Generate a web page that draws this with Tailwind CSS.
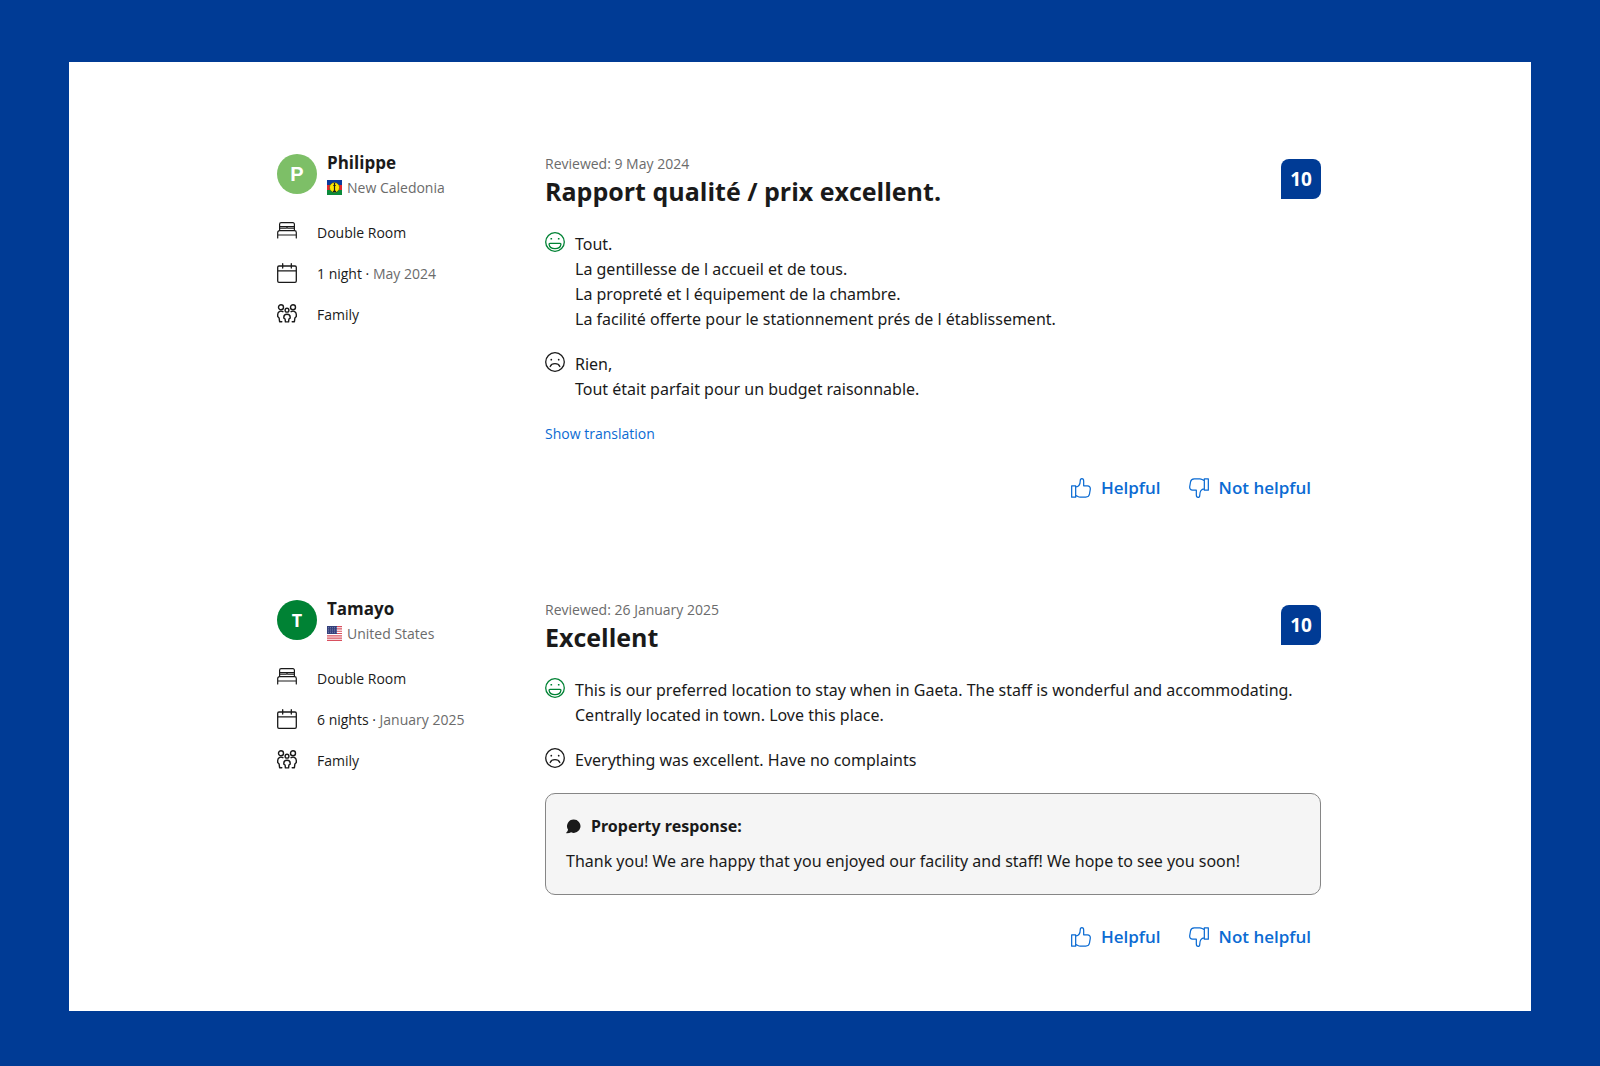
<!DOCTYPE html>
<html lang="en">
<head>
  <meta charset="UTF-8">
  <meta name="viewport" content="width=device-width, initial-scale=1.0">
  <title>Guest reviews</title>
  <script src="https://cdn.jsdelivr.net/npm/@tailwindcss/browser@4"></script>
</head>
<body class="bg-[#003b95] px-[69px] py-[62px] font-['Open_Sans',sans-serif] text-[#1a1a1a]">

  <!-- Shared icons -->
  <svg class="hidden" aria-hidden="true">
    <symbol id="bed" viewBox="0 0 20 20" fill="none" stroke="currentColor" stroke-width="1.2" stroke-linecap="round" stroke-linejoin="round">
      <path d="M.7 16V10.500a1.800 1.800 0 0 1 1.800-1.800h15a1.800 1.800 0 0 1 1.800 1.800V16M.7 13h18.600M2.600 8.500V2.200A1.500 1.500 0 0 1 4.100.7h11.800a1.500 1.500 0 0 1 1.500 1.500v6.300M2.800 4.500h14.400M10 4.700v1.200M9.200 6.200H3M10.800 6.200H17"/>
    </symbol>
    <symbol id="calendar" viewBox="0 0 20 20" fill="none" stroke="currentColor" stroke-width="1.3" stroke-linecap="round" stroke-linejoin="round">
      <path d="M2 3h16a1.300 1.300 0 0 1 1.300 1.300v13.700a1.300 1.300 0 0 1-1.300 1.300H2A1.300 1.300 0 0 1 .7 18V4.300A1.300 1.300 0 0 1 2 3zM.7 7.900h18.600M5.700.7v4.400M14.300.7v4.400"/>
    </symbol>
    <symbol id="family" viewBox="0 0 20 20" fill="none" stroke="currentColor" stroke-width="1.400" stroke-linecap="round" stroke-linejoin="round">
      <circle cx="4" cy="3.200" r="2.500"/>
      <circle cx="16" cy="3.200" r="2.500"/>
      <circle cx="10" cy="6.200" r="1.900"/>
      <path d="M5.900 7.700C3.200 6.300.7 7.800.7 10.600v2l1.400 1.300.5 3.800h2.200M14.100 7.700c2.700-1.400 5.200.1 5.200 2.900v2l-1.400 1.300-.5 3.800h-2.200"/>
      <path d="M10 10.200c-1.900 0-3.200 1.200-3.200 3v.9l1.300.9.300 2.900h3.200l.3-2.900 1.300-.9v-.9c0-1.800-1.300-3-3.200-3z"/>
    </symbol>
    <symbol id="smile" viewBox="0 0 20 20" fill="none" stroke="currentColor" stroke-width="1.300" stroke-linejoin="round">
      <circle cx="10" cy="10" r="9.300"/>
      <path d="M4.900 11.400h10.200a.8.800 0 0 1 .8.900c-.4 2.700-2.600 4.300-5.900 4.300s-5.500-1.600-5.900-4.300a.8.800 0 0 1 .8-.9z"/>
      <path d="M6.300 5.900v1.600M13.700 5.900v1.600" stroke-width="1.600"/>
    </symbol>
    <symbol id="frown" viewBox="0 0 20 20" fill="none" stroke="currentColor" stroke-width="1.300" stroke-linecap="round">
      <circle cx="10" cy="10" r="9.300"/>
      <path d="M5.200 14.600C6 12.600 7.800 11.700 10 11.700s4 .9 4.800 2.900"/>
      <path d="M6.300 7.500v.2M13.700 7.500v.2" stroke-width="1.700"/>
    </symbol>
    <symbol id="thumb-up" viewBox="0 0 21 21" fill="none" stroke="currentColor" stroke-width="1.300" stroke-linecap="round" stroke-linejoin="round">
      <path d="M.7 8.200h4.200v11.900H.7zM4.900 18.300l2.300 1.100c.8.400 1.500.6 2.400.6h5.900c2.300 0 3.600-1.200 3.900-3.200l.8-4.600c.4-2.500-.8-4-3-4h-3.900V3.200c0-1.400-.6-2.500-1.800-2.500s-1.800.9-1.800 2.300c0 3-1.500 6.300-4.800 6.600"/>
    </symbol>
    <symbol id="chat" viewBox="0 0 16 16" fill="currentColor">
      <path d="M8.200.6a7.100 7.100 0 1 1-2.700 13.600c-1.400.8-3.100 1.200-4.800 1.100-.5 0-.6-.5-.3-.8.9-.9 1.600-2 1.800-3A7.100 7.100 0 0 1 8.200.6z"/>
    </symbol>
  </svg>

  <main class="bg-white pt-[88px] pr-[210px] pb-[54px] pl-52">

    <!-- Review: Philippe -->
    <article class="flex gap-11">
      <aside class="w-56 shrink-0">
        <div class="flex gap-[10px]">
          <div class="mt-1 flex size-10 items-center justify-center rounded-full bg-[#7dbf67] font-['Liberation_Sans',sans-serif] text-xl font-bold text-white">P</div>
          <div>
            <h2 class="text-[17px] leading-[25px] font-bold">Philippe</h2>
            <p class="flex items-center gap-[5px] text-[14px] leading-[25px] text-[#6b6b6b]">
              <svg class="size-[15px]" viewBox="0 0 15 15" aria-hidden="true">
                <path fill="#0a3a9c" d="M0 0h15v5H0z"/>
                <path fill="#e0262f" d="M0 5h15v5H0z"/>
                <path fill="#0b8a3a" d="M0 10h15v5H0z"/>
                <circle cx="7.500" cy="7.500" r="5" fill="#fae600" stroke="#1a1a1a" stroke-width=".4"/>
                <path stroke="#1a1a1a" stroke-width="1.200" d="M7.500 3v9M6.300 5.500h2.400M6 11.300h3"/>
              </svg>
              New Caledonia
            </p>
          </div>
        </div>
        <ul class="mt-[22px] flex flex-col gap-5 text-[14px] leading-[21px]">
          <li class="flex gap-5"><svg class="size-5" aria-hidden="true"><use href="#bed"/></svg>Double Room</li>
          <li class="flex gap-5"><svg class="size-5" aria-hidden="true"><use href="#calendar"/></svg><span>1 night · <span class="text-[#6b6b6b]">May 2024</span></span></li>
          <li class="flex gap-5"><svg class="size-5" aria-hidden="true"><use href="#family"/></svg>Family</li>
        </ul>
      </aside>

      <div class="grow pt-1">
        <div class="flex justify-between">
          <div>
            <p class="text-[14px] leading-5 text-[#6b6b6b]">Reviewed: 9 May 2024</p>
            <h3 class="mt-[2px] text-[25px] leading-[30px] font-bold">Rapport qualité / prix excellent.</h3>
          </div>
          <div class="mt-[5px] flex size-10 items-center justify-center rounded-lg rounded-bl-none bg-[#003b95] text-[19px] font-bold text-white">10</div>
        </div>
        <div class="mt-[26px] flex gap-[10px] font-['Noto_Sans',sans-serif] text-[16px] leading-[25px]">
          <svg class="size-5 shrink-0 text-[#008234]" aria-hidden="true"><use href="#smile"/></svg>
          <p>Tout.<br>La gentillesse de l accueil et de tous.<br>La propreté et l équipement de la chambre.<br>La facilité offerte pour le stationnement prés de l établissement.</p>
        </div>
        <div class="mt-5 flex gap-[10px] font-['Noto_Sans',sans-serif] text-[16px] leading-[25px]">
          <svg class="size-5 shrink-0" aria-hidden="true"><use href="#frown"/></svg>
          <p>Rien,<br>Tout était parfait pour un budget raisonnable.</p>
        </div>
        <a href="#" class="mt-5 block text-[14px] leading-6 text-[#0b6bd3]">Show translation</a>
        <div class="mt-[22px] flex justify-end gap-2 text-[17px] font-semibold text-[#0b6bd3]">
          <button type="button" class="flex h-10 items-center gap-[10px] px-[10px]">
            <svg class="size-5" aria-hidden="true"><use href="#thumb-up"/></svg>Helpful
          </button>
          <button type="button" class="flex h-10 items-center gap-[10px] px-[10px]">
            <svg class="size-5 rotate-180" aria-hidden="true"><use href="#thumb-up"/></svg>Not helpful
          </button>
        </div>
      </div>
    </article>

    <!-- Review: Tamayo -->
    <article class="mt-[88px] flex gap-11">
      <aside class="w-56 shrink-0">
        <div class="flex gap-[10px]">
          <div class="mt-1 flex size-10 items-center justify-center rounded-full bg-[#008234] text-[18px] font-bold text-white">T</div>
          <div>
            <h2 class="text-[17px] leading-[25px] font-bold">Tamayo</h2>
            <p class="flex items-center gap-[5px] text-[14px] leading-[25px] text-[#6b6b6b]">
              <svg class="size-[15px]" viewBox="0 0 15 15" aria-hidden="true">
                <path fill="#fff" d="M0 0h15v15H0z"/>
                <path stroke="#d8505f" stroke-width="1.150" d="M0 .6h15M0 2.900h15M0 5.200h15M0 7.500h15M0 9.800h15M0 12.100h15M0 14.400h15"/>
                <path fill="#34407c" d="M0 0h10v8H0z"/>
                <path stroke="#a9b0d0" stroke-width=".7" stroke-dasharray=".7 1.300" d="M1 1.500h9M1 3.200h9M1 4.900h9M1 6.600h9"/>
              </svg>
              United States
            </p>
          </div>
        </div>
        <ul class="mt-[22px] flex flex-col gap-5 text-[14px] leading-[21px]">
          <li class="flex gap-5"><svg class="size-5" aria-hidden="true"><use href="#bed"/></svg>Double Room</li>
          <li class="flex gap-5"><svg class="size-5" aria-hidden="true"><use href="#calendar"/></svg><span>6 nights · <span class="text-[#6b6b6b]">January 2025</span></span></li>
          <li class="flex gap-5"><svg class="size-5" aria-hidden="true"><use href="#family"/></svg>Family</li>
        </ul>
      </aside>

      <div class="grow pt-1">
        <div class="flex justify-between">
          <div>
            <p class="text-[14px] leading-5 text-[#6b6b6b]">Reviewed: 26 January 2025</p>
            <h3 class="mt-[2px] text-[25px] leading-[30px] font-bold">Excellent</h3>
          </div>
          <div class="mt-[5px] flex size-10 items-center justify-center rounded-lg rounded-bl-none bg-[#003b95] text-[19px] font-bold text-white">10</div>
        </div>
        <div class="mt-[26px] flex gap-[10px] font-['Noto_Sans',sans-serif] text-[16px] leading-[25px]">
          <svg class="size-5 shrink-0 text-[#008234]" aria-hidden="true"><use href="#smile"/></svg>
          <p>This is our preferred location to stay when in Gaeta. The staff is wonderful and accommodating. Centrally located in town. Love this place.</p>
        </div>
        <div class="mt-5 flex gap-[10px] font-['Noto_Sans',sans-serif] text-[16px] leading-[25px]">
          <svg class="size-5 shrink-0" aria-hidden="true"><use href="#frown"/></svg>
          <p>Everything was excellent. Have no complaints</p>
        </div>
        <section class="mt-5 rounded-[10px] border border-[#868686] bg-[#f5f5f5] px-5 py-5 font-['Noto_Sans',sans-serif] text-[16px] leading-[25px]">
          <h4 class="flex items-center gap-[10px] font-bold"><svg class="size-[15px]" aria-hidden="true"><use href="#chat"/></svg>Property response:</h4>
          <p class="mt-[10px]">Thank you! We are happy that you enjoyed our facility and staff! We hope to see you soon!</p>
        </section>
        <div class="mt-[22px] flex justify-end gap-2 text-[17px] font-semibold text-[#0b6bd3]">
          <button type="button" class="flex h-10 items-center gap-[10px] px-[10px]">
            <svg class="size-5" aria-hidden="true"><use href="#thumb-up"/></svg>Helpful
          </button>
          <button type="button" class="flex h-10 items-center gap-[10px] px-[10px]">
            <svg class="size-5 rotate-180" aria-hidden="true"><use href="#thumb-up"/></svg>Not helpful
          </button>
        </div>
      </div>
    </article>
  </main>
</body>
</html>
